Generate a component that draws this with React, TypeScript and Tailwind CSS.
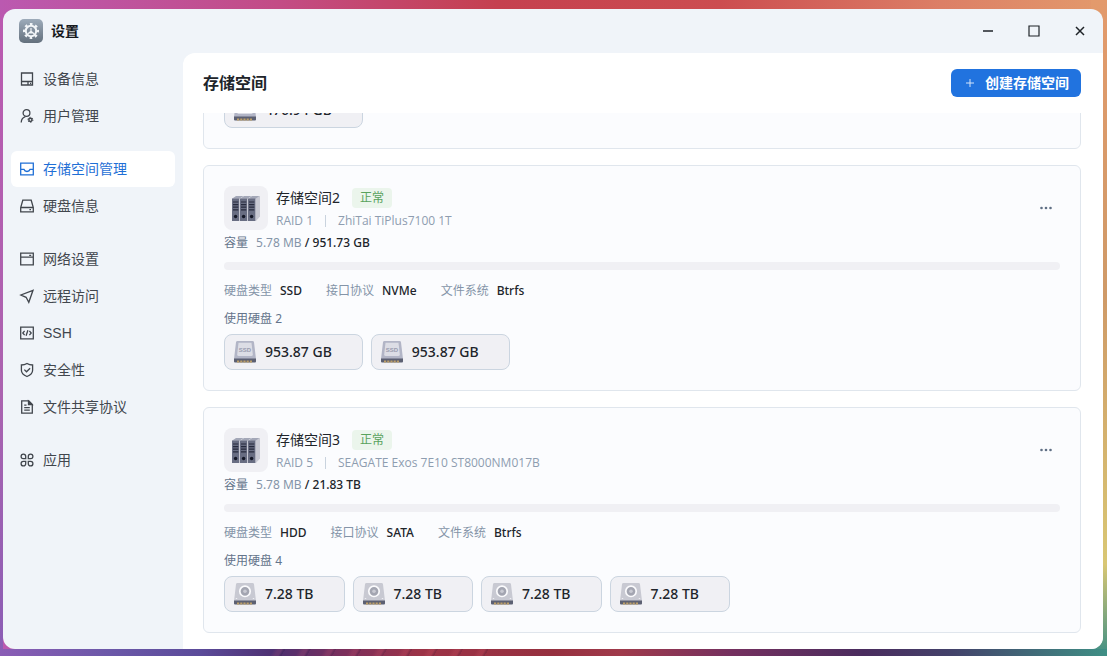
import type { ReactNode } from "react";
import { useLayoutEffect, useRef } from "react";

type IconName =
  | "device"
  | "user"
  | "storage"
  | "disk"
  | "network"
  | "remote"
  | "ssh"
  | "security"
  | "file"
  | "apps";

type DriveType = "SSD" | "HDD";

interface Pool {
  name?: string;
  raid?: string;
  model?: string;
  used?: string;
  total?: string;
  protocol?: string;
  driveType: DriveType;
  drives: string[];
}

const MENU: { icon: IconName; label: string }[][] = [
  [
    { icon: "device", label: "设备信息" },
    { icon: "user", label: "用户管理" },
  ],
  [
    { icon: "storage", label: "存储空间管理" },
    { icon: "disk", label: "硬盘信息" },
  ],
  [
    { icon: "network", label: "网络设置" },
    { icon: "remote", label: "远程访问" },
    { icon: "ssh", label: "SSH" },
    { icon: "security", label: "安全性" },
    { icon: "file", label: "文件共享协议" },
  ],
  [{ icon: "apps", label: "应用" }],
];

const POOLS: Pool[] = [
  { driveType: "SSD", drives: ["476.94 GB"] },
  {
    name: "存储空间2",
    raid: "RAID 1",
    model: "ZhiTai TiPlus7100 1T",
    used: "5.78 MB",
    total: "951.73 GB",
    protocol: "NVMe",
    driveType: "SSD",
    drives: ["953.87 GB", "953.87 GB"],
  },
  {
    name: "存储空间3",
    raid: "RAID 5",
    model: "SEAGATE Exos 7E10 ST8000NM017B",
    used: "5.78 MB",
    total: "21.83 TB",
    protocol: "SATA",
    driveType: "HDD",
    drives: ["7.28 TB", "7.28 TB", "7.28 TB", "7.28 TB"],
  },
];

const ICON_PATHS: Record<IconName, ReactNode> = {
  device: (
    <>
      <path d="M2.500 2h11v12h-11zM2.500 10.500h11M9 10.500V14" />
      <path d="M11 12.300h1.200" />
    </>
  ),
  user: (
    <>
      <circle cx="7.500" cy="5" r="3.400" />
      <path d="M2.200 14.500c.2-3 1.600-5 4.200-5.800" />
      <circle cx="11.400" cy="11.800" r="1.600" strokeWidth="1.500" />
      <circle cx="11.400" cy="11.800" r="2.500" strokeWidth="1" strokeDasharray="1.300 1.318" />
    </>
  ),
  storage: (
    <path d="M1.700 2.200h12.600v11.600H1.700zM1.700 8.300h3.200c.5 1.500 1.600 2.200 3.100 2.200s2.600-.7 3.100-2.200h3.200" />
  ),
  disk: (
    <>
      <path d="M3.800 2.200h8.400l2.100 7.300v4.300H1.700V9.500zM1.700 9.500h12.600" />
      <path d="M10.400 11.700h1.600" />
    </>
  ),
  network: <path d="M1.700 2.200h12.600v11.600H1.700zM1.700 6.200h12.600M10.200 4.300h2" />,
  remote: <path d="M14 2.300 1.900 7l5.200 2.300 2.700 5z" />,
  ssh: (
    <path d="M1.700 2.200h12.600v11.600H1.700zM5.600 5.800 3.800 8l1.800 2.200M10.400 5.800 12.200 8l-1.800 2.200M8.900 5.300l-1.800 5.400" />
  ),
  security: (
    <path d="M8 1.500c1.700 1 3.600 1.500 5.600 1.500v5.200c0 3-2.200 5-5.600 6.300-3.400-1.300-5.600-3.300-5.600-6.300V3c2 0 3.900-.5 5.600-1.500zM5.300 7.600l2.200 2.200 3.600-3.600" />
  ),
  file: (
    <>
      <path d="M2.700 1.900h7.100l3.500 3.500v8.700H2.700zM5.200 6.200h2.300M5.200 8.700h5.600M5.200 11.200h5.600" />
      <path d="M9.500 2v3.700h3.700z" fill="currentColor" />
    </>
  ),
  apps: (
    <path d="M6.700 6.700H4.300A2.300 2.300 0 1 1 6.700 4.300zM9.300 6.700V4.300a2.300 2.300 0 1 1 2.400 2.400zM6.700 9.300v2.400a2.300 2.300 0 1 1-2.400-2.400zM9.300 9.300h2.400a2.300 2.300 0 1 1-2.400 2.400z" />
  ),
};

function MenuIcon({ name }: { name: IconName }) {
  return (
    <svg
      viewBox="0 0 16 16"
      className="size-4 shrink-0"
      fill="none"
      stroke="currentColor"
      strokeWidth="1.300"
      aria-hidden="true"
    >
      {ICON_PATHS[name]}
    </svg>
  );
}

function SettingsLogo() {
  return (
    <svg viewBox="0 0 24 24" className="size-6" aria-hidden="true">
      <defs>
        <linearGradient id="logo" x1="0" y1="0" x2="0" y2="1">
          <stop offset="0" stopColor="#9dabba" />
          <stop offset="1" stopColor="#64707d" />
        </linearGradient>
      </defs>
      <rect width="24" height="24" rx="5" fill="url(#logo)" />
      <g fill="none" stroke="#f2f5f8">
        <circle cx="12" cy="12" r="5.200" strokeWidth="2" />
        <circle
          cx="12"
          cy="12"
          r="6.900"
          strokeWidth="2.200"
          strokeDasharray="2.600 2.819"
          strokeDashoffset="1.300"
        />
        <path d="M12 9v3.200l-3 2.600M12 12.200l3 2.600M10 13.800h4" strokeWidth="1.200" />
      </g>
    </svg>
  );
}

function ServerIcon() {
  return (
    <svg viewBox="0 0 28 28" className="size-7" aria-hidden="true">
      <path d="M19 4 28 2v20.500l-4 4.500h-5z" fill="#c9cad4" />
      {[0, 8, 16].map((x) => (
        <g key={x}>
          <path d={`M${x} 4.800 ${x + 4} 2h7.500l-4 2.800z`} fill="#a3a7b7" />
          <path d={`M${x} 4.500h7.300V27H${x}z`} fill="#686d82" />
          <path
            d={`M${x + 1} 8h5.300M${x + 1} 10.600h5.300M${x + 1} 13.200h5.300M${x + 1} 15.800h5.300`}
            stroke="#262a3d"
            strokeWidth="1.200"
          />
          <circle cx={x + 3.6} cy="22.500" r="1.700" fill="#141827" />
        </g>
      ))}
    </svg>
  );
}

function DriveIcon({ type }: { type: DriveType }) {
  return (
    <svg viewBox="0 0 24 24" className="size-6 shrink-0" aria-hidden="true">
      <path
        d="M4.500 1h15a1.500 1.500 0 0 1 1.500 1.300L23 19H1L3 2.300A1.500 1.500 0 0 1 4.500 1z"
        fill={type === "SSD" ? "#b2b5c6" : "#c8c9d2"}
      />
      <path d="M1 18.500h22v3a1 1 0 0 1-1 1H2a1 1 0 0 1-1-1z" fill="#5c6072" />
      <path d="M4 21.500h16" stroke="#bd9f68" strokeWidth="2" strokeDasharray="2.200 1" />
      {type === "SSD" ? (
        <>
          <path
            d="M5.500 2.800h13l1.300 11.700a1.500 1.500 0 0 1-1.500 1.500H5.700a1.500 1.500 0 0 1-1.500-1.500z"
            fill="#dcdde5"
          />
          <text
            x="12"
            y="12"
            textAnchor="middle"
            fontSize="6"
            fontWeight="700"
            fill="#989bae"
            className="font-['Liberation_Sans',sans-serif]"
          >
            SSD
          </text>
        </>
      ) : (
        <>
          <circle cx="12" cy="9.300" r="5.200" fill="#a3a5b1" stroke="#fbfbfd" strokeWidth="1.700" />
          <circle cx="12" cy="9.300" r="1.800" fill="#c9cad3" />
          <path d="M2.800 16.500h1.400M19.800 16.500h1.400" stroke="#eeeef2" />
        </>
      )}
    </svg>
  );
}

function Spec({ label, value }: { label: string; value: string }) {
  return (
    <div className="flex gap-2">
      <dt className="text-[#8494a8]">{label}</dt>
      <dd className="font-medium text-[#20242a]">{value}</dd>
    </div>
  );
}

function PoolCard({ pool }: { pool: Pool }) {
  return (
    <article className="shrink-0 rounded-md border border-[#e0e6ed] bg-[#fbfcfe] p-5 text-xs leading-[18px]">
      {pool.name && (
        <>
          <div className="flex h-11 items-end gap-2">
            <div className="flex size-11 shrink-0 items-center justify-center rounded-lg bg-[#f0f0f4]">
              <ServerIcon />
            </div>
            <div className="flex min-w-0 flex-1 flex-col gap-1">
              <div className="flex items-center gap-3">
                <h2 className="text-sm leading-5 text-[#20242a]">{pool.name}</h2>
                <span className="rounded bg-[#ebf5ec] px-2 leading-5 text-[#58a25c]">正常</span>
              </div>
              <div className="flex items-center gap-3 font-['Open_Sans',sans-serif] text-[#8e9db0]">
                <span>{pool.raid}</span>
                <span className="h-3 w-px bg-[#c9d3de]" />
                <span>{pool.model}</span>
              </div>
            </div>
            <button
              type="button"
              aria-label="更多"
              className="flex size-7 items-center justify-center self-center text-[#5f6f84]"
            >
              <svg viewBox="0 0 16 16" className="size-4" fill="currentColor" aria-hidden="true">
                <circle cx="3.500" cy="8" r="1.300" />
                <circle cx="8" cy="8" r="1.300" />
                <circle cx="12.500" cy="8" r="1.300" />
              </svg>
            </button>
          </div>
          <p className="mt-1 flex gap-2 text-[#64748b]">
            <span>容量</span>
            <span className="text-[#8494a8]">
              {pool.used} <span className="font-medium text-[#20242a]">/ {pool.total}</span>
            </span>
          </p>
          <div className="mt-2.5 h-2 rounded bg-[#f0f0f4]" />
          <dl className="mt-3 flex gap-6">
            <Spec label="硬盘类型" value={pool.driveType} />
            <Spec label="接口协议" value={pool.protocol ?? ""} />
            <Spec label="文件系统" value="Btrfs" />
          </dl>
          <p className="mt-2.5 text-[#64748b]">使用硬盘 {pool.drives.length}</p>
        </>
      )}
      <ul className="mt-1.5 flex flex-wrap gap-2">
        {pool.drives.map((size, i) => (
          <li
            key={i}
            className="flex h-9 items-center gap-2 rounded-lg border border-[#cbd5e0] bg-[#f0f0f4] pr-[30px] pl-2 text-sm font-medium text-[#20242a]"
          >
            <DriveIcon type={pool.driveType} />
            {size}
          </li>
        ))}
      </ul>
    </article>
  );
}

function WindowControls() {
  return (
    <div className="flex h-full">
      <button type="button" aria-label="最小化" className="flex w-[46px] items-center justify-center">
        <svg viewBox="0 0 12 12" className="size-3" stroke="#1f2328" aria-hidden="true">
          <path d="M1 6h10" strokeWidth="1.500" />
        </svg>
      </button>
      <button type="button" aria-label="最大化" className="flex w-[46px] items-center justify-center">
        <svg viewBox="0 0 12 12" className="size-3" fill="none" stroke="#1f2328" aria-hidden="true">
          <path d="M1 1h10v10H1z" strokeWidth="1.200" />
        </svg>
      </button>
      <button type="button" aria-label="关闭" className="flex w-[46px] items-center justify-center">
        <svg viewBox="0 0 12 12" className="size-3" stroke="#1f2328" aria-hidden="true">
          <path d="m2 2 8 8M10 2l-8 8" strokeWidth="1.500" />
        </svg>
      </button>
    </div>
  );
}

export default function App() {
  const listRef = useRef<HTMLDivElement>(null);

  // open on the most recently created pools
  useLayoutEffect(() => {
    const list = listRef.current;
    if (list) list.scrollTop = list.scrollHeight;
  }, []);

  return (
    <div className="flex h-screen bg-[repeating-linear-gradient(120deg,#ffffff00_0_12px,#ff70801f_16px_19px,#1a103026_21px_22px),linear-gradient(to_right,#8a5db5,#6b58a8_10%,#5b4b9a_18%,#4d2f70_25%,#7b2f5c_31%,#9c3347_38%,#96303f_50%,#a03a4b_56%,#75305f_66%,#4a2c5e_78%,#43426a_86%,#3f8f85),linear-gradient(#bb59b0,#ab63b0_60%,#8a5db5),linear-gradient(#e39a6c,#cf9a68_45%,#d9c774_86%,#3f8f85),linear-gradient(to_right,#bb59b0,#c34c86_25%,#c5404f_45%,#cc4d50_65%,#dc7f66_85%,#e39a6c)] bg-[size:240px_7px,100%_7px,3px_100%,16px_100%,100%_100%] bg-[position:30%_100%,bottom,left,right,top] bg-no-repeat pt-[9px] pr-1 pb-[7px] pl-[3px] font-['Noto_Sans','Noto_Sans_CJK_SC',sans-serif]">
      <div className="flex min-w-0 flex-1 flex-col overflow-hidden rounded-xl bg-[#f0f4f9]">
        <header className="flex h-11 shrink-0 items-center justify-between pl-4">
          <div className="flex items-center gap-2">
            <SettingsLogo />
            <span className="text-sm font-bold text-[#16191d]">设置</span>
          </div>
          <WindowControls />
        </header>
        <div className="flex min-h-0 flex-1">
          <nav className="flex w-[180px] shrink-0 flex-col gap-[17px] px-2 pt-2 font-['Liberation_Sans','Noto_Sans_CJK_SC',sans-serif]">
            {MENU.map((group, i) => (
              <ul key={i} className="flex flex-col gap-px">
                {group.map(({ icon, label }) => (
                  <li key={label}>
                    <a
                      href="#"
                      className={
                        icon === "storage"
                          ? "flex h-9 items-center gap-2 rounded-md bg-white px-2 text-sm text-[#1f6fd6]"
                          : "flex h-9 items-center gap-2 rounded-md px-2 text-sm text-[#41464d]"
                      }
                    >
                      <MenuIcon name={icon} />
                      {label}
                    </a>
                  </li>
                ))}
              </ul>
            ))}
          </nav>
          <main className="flex min-w-0 flex-1 flex-col rounded-tl-xl bg-white pr-[22px] pl-5">
            <div className="flex h-15 shrink-0 items-center justify-between">
              <h1 className="text-base font-bold text-[#20242a]">存储空间</h1>
              <button
                type="button"
                className="flex h-7 items-center gap-2 rounded-md bg-[#2173df] px-3 text-sm font-bold text-white"
              >
                <svg viewBox="0 0 14 14" className="size-3.5" stroke="#d5e5fa" aria-hidden="true">
                  <path d="M7 3v8M3 7h8" />
                </svg>
                创建存储空间
              </button>
            </div>
            <div
              ref={listRef}
              className="flex min-h-0 flex-1 flex-col gap-4 overflow-y-auto pb-4 [scrollbar-width:none]"
            >
              {POOLS.map((pool, i) => (
                <PoolCard key={i} pool={pool} />
              ))}
            </div>
          </main>
        </div>
      </div>
    </div>
  );
}
